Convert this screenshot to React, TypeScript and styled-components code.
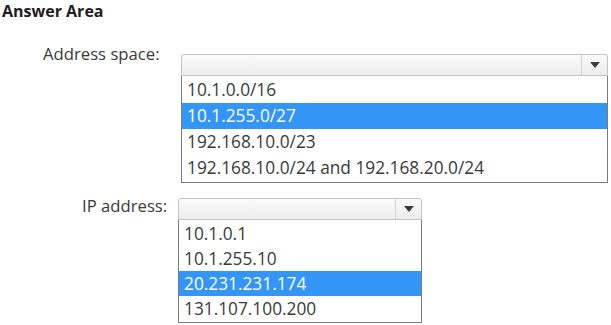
import styled, { createGlobalStyle } from "styled-components";

const GlobalStyle = createGlobalStyle`
  html, body { margin: 0; padding: 0; background: #fff; }
  body { font-family: "Open Sans", "Noto Sans", sans-serif; color: #333; }
`;

const Page = styled.main`
  width: 611px;
  height: 325px;
  overflow: hidden;
  box-sizing: border-box;
  padding-left: 2px;
`;

const Title = styled.h1`
  margin: 0;
  padding-top: 1px;
  font: 700 16px/20px "Open Sans", sans-serif;
  color: #1e1e1e;
`;

const Field = styled.div<{ $top: number; $controlLeft: number; $width: number }>`
  display: grid;
  grid-template-columns: ${(p) => p.$controlLeft - 2}px ${(p) => p.$width}px;
  align-items: start;
  margin-top: ${(p) => p.$top}px;
`;

const Label = styled.label<{ $indent: number }>`
  padding-left: ${(p) => p.$indent - 2}px;
  font-size: 16.7px;
  line-height: 24px;
  color: #3a3a3a;
  white-space: nowrap;
`;

const Control = styled.div<{ $offset: number }>`
  margin-top: ${(p) => p.$offset}px;
  display: flex;
  flex-direction: column;
`;

const SelectBox = styled.div`
  height: 22px;
  box-sizing: border-box;
  display: flex;
  border: 1px solid #c4c4c4;
  border-radius: 3px 3px 0 0;
  background: linear-gradient(#fbfbfb, #ececec);
`;

const SelectValue = styled.span` flex: 1; `;

const ArrowCell = styled.span`
  width: 25px;
  display: flex;
  align-items: center;
  justify-content: center;
  border-left: 1px solid #d2d2d2;
`;

const Options = styled.ul<{ $rowHeight: number }>`
  margin: 0;
  padding: 1px 0 1px;
  list-style: none;
  border: 1px solid #7b7b7b;
  border-top: none;
  li { height: ${(p) => p.$rowHeight}px; line-height: ${(p) => p.$rowHeight}px; }
`;

const Option = styled.li<{ $selected?: boolean }>`
  padding-left: 5px;
  font-size: 17.3px;
  white-space: nowrap;
  color: ${(p) => (p.$selected ? "#fff" : "#3a3a3a")};
  background: ${(p) => (p.$selected ? "#3395f5" : "transparent")};
`;

function Dropdown({ options, selected, rowHeight, offset }: { options: string[]; selected: number; rowHeight: number; offset: number }) {
  return (
    <Control $offset={offset}>
      <SelectBox>
        <SelectValue />
        <ArrowCell>
          <svg width="10" height="6" viewBox="0 0 10 6">
            <path d="M0 0h10L5 6z" fill="#3c3c3c" />
          </svg>
        </ArrowCell>
      </SelectBox>
      <Options $rowHeight={rowHeight}>
        {options.map((o, i) => (
          <Option key={o} $selected={i === selected}>{o}</Option>
        ))}
      </Options>
    </Control>
  );
}

export default function App() {
  return (
    <Page>
      <GlobalStyle />
      <Title>Answer Area</Title>
      <Field $top={21} $controlLeft={181} $width={427}>
        <Label $indent={43}>Address space:</Label>
        <Dropdown
          offset={12}
          rowHeight={26}
          selected={1}
          options={["10.1.0.0/16", "10.1.255.0/27", "192.168.10.0/23", "192.168.10.0/24 and 192.168.20.0/24"]}
        />
      </Field>
      <Field $top={11} $controlLeft={178} $width={244}>
        <Label $indent={82}>IP address:</Label>
        <Dropdown
          offset={4}
          rowHeight={25}
          selected={2}
          options={["10.1.0.1", "10.1.255.10", "20.231.231.174", "131.107.100.200"]}
        />
      </Field>
    </Page>
  );
}
